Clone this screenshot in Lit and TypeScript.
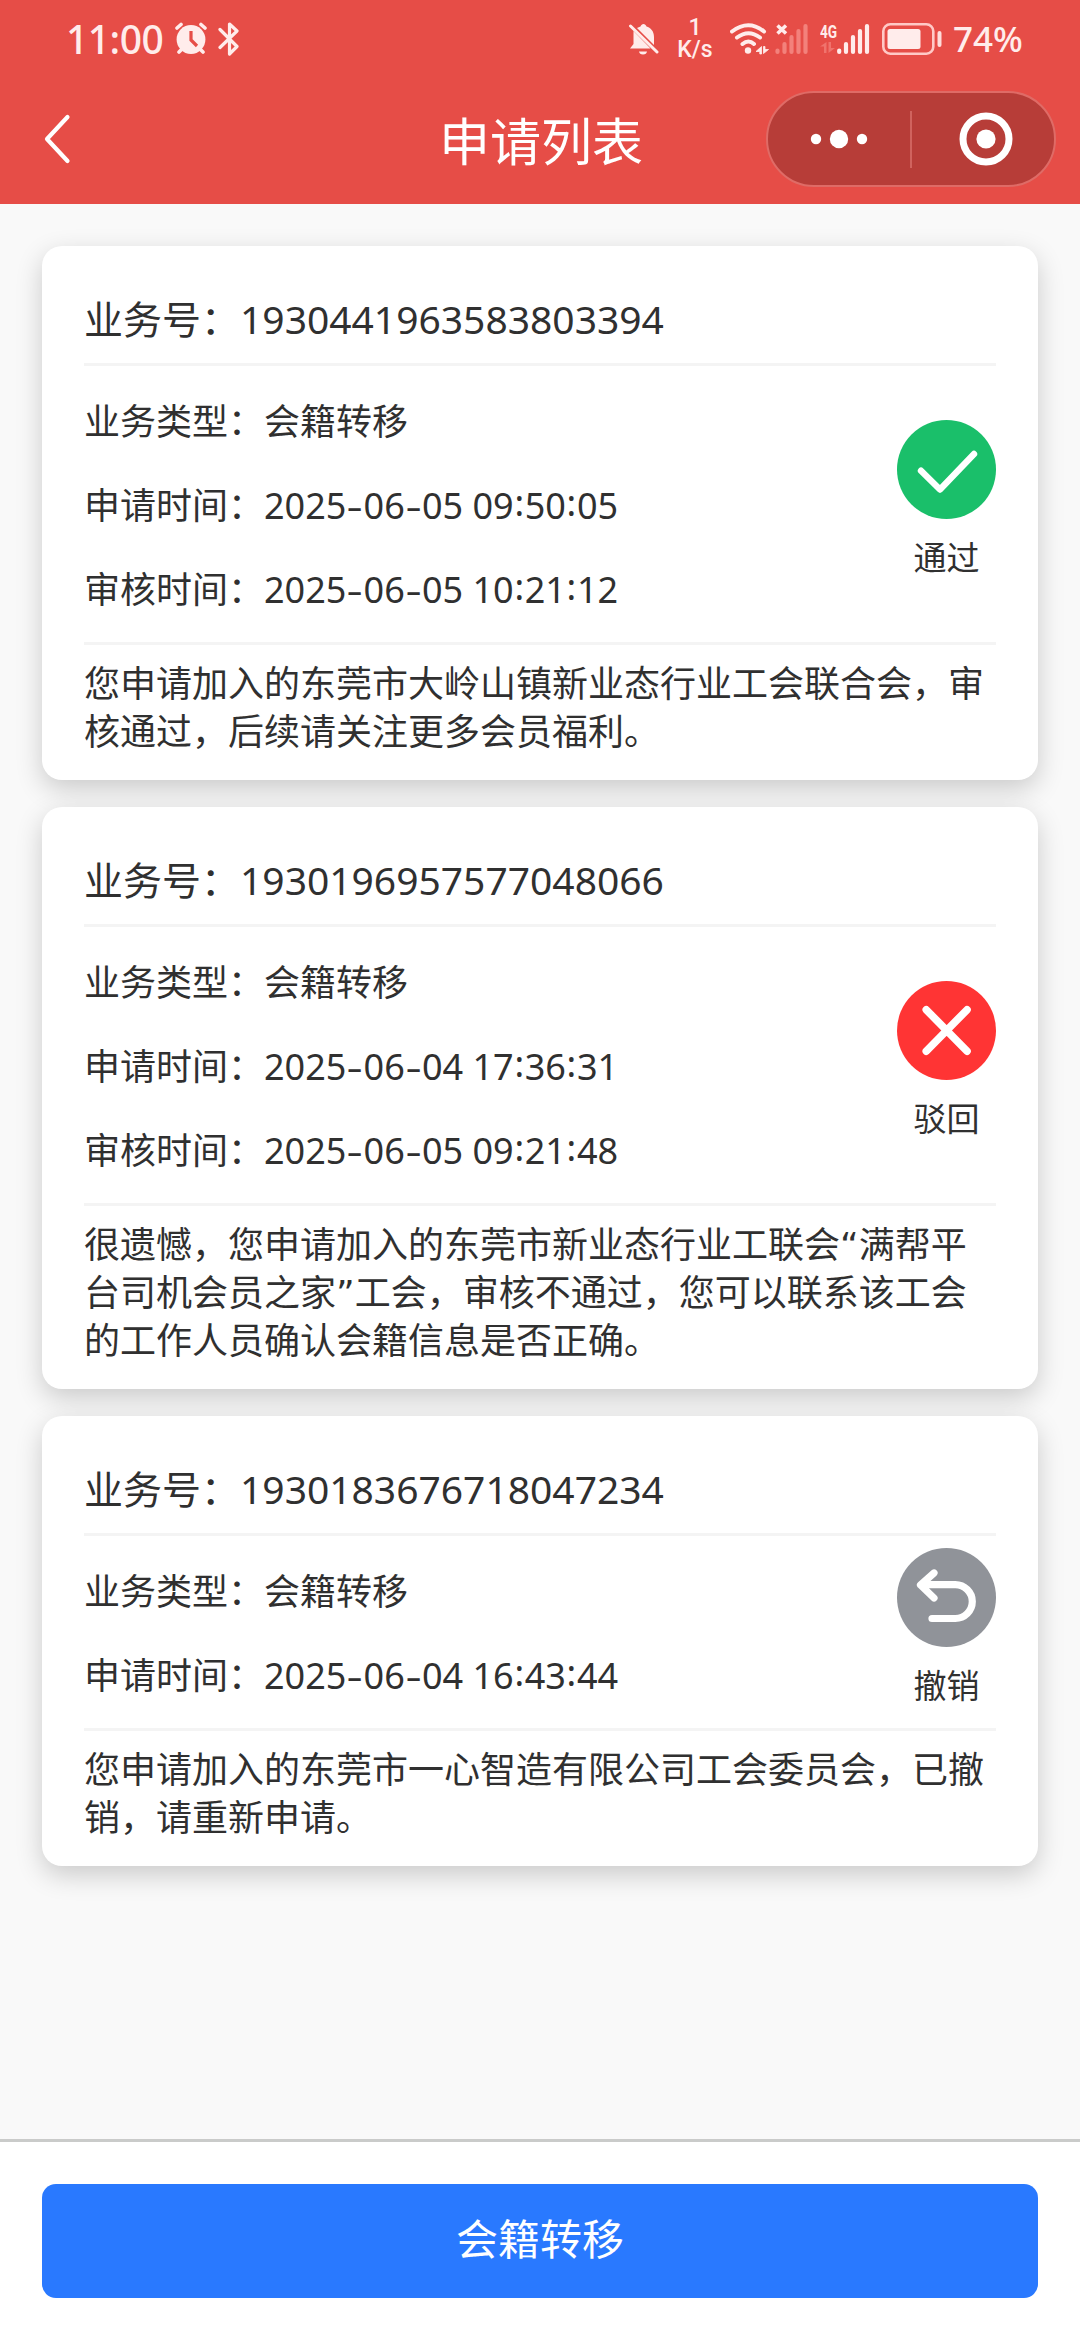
import { LitElement, html, css, svg, type TemplateResult } from "lit";
import { customElement, property } from "lit/decorators.js";

type Status = "pass" | "reject" | "revoke";

interface Application {
  id: string;
  type: string;
  applied: string;
  reviewed?: string;
  status: Status;
  message: string;
}

const applications: Application[] = [
  {
    id: "1930441963583803394",
    type: "会籍转移",
    applied: "2025-06-05 09:50:05",
    reviewed: "2025-06-05 10:21:12",
    status: "pass",
    message: "您申请加入的东莞市大岭山镇新业态行业工会联合会，审核通过，后续请关注更多会员福利。",
  },
  {
    id: "1930196957577048066",
    type: "会籍转移",
    applied: "2025-06-04 17:36:31",
    reviewed: "2025-06-05 09:21:48",
    status: "reject",
    message:
      "很遗憾，您申请加入的东莞市新业态行业工联会“满帮平台司机会员之家”工会，审核不通过，您可以联系该工会的工作人员确认会籍信息是否正确。",
  },
  {
    id: "1930183676718047234",
    type: "会籍转移",
    applied: "2025-06-04 16:43:44",
    status: "revoke",
    message: "您申请加入的东莞市一心智造有限公司工会委员会，已撤销，请重新申请。",
  },
];

const statusLabels: Record<Status, string> = { pass: "通过", reject: "驳回", revoke: "撤销" };
const statusColors: Record<Status, string> = { pass: "#1abf6a", reject: "#ff3434", revoke: "#909399" };
const statusMarks: Record<Status, TemplateResult> = {
  pass: svg`<path d="M24 50.7 43 69.5 77 34" stroke-width="6.4"/>`,
  reject: svg`<path d="M29.3 28.8 70 70.2M70 28.8 29.3 70.2" stroke-width="7.6"/>`,
  revoke: svg`<path d="M37 25 23.5 37 37 50M25 36.7H58.3A17 16.9 0 0 1 58.3 70.5H35" stroke-width="7.2"/>`,
};

@customElement("phone-status-bar")
class PhoneStatusBar extends LitElement {
  static styles = css`
    :host { display: block; color: #ffeceb; }
    .bar { display: flex; align-items: center; height: 78px; padding: 0 61px 0 66px; }
    .time { font-size: 39px; font-weight: 500; letter-spacing: -0.5px; line-height: 78px; width: 101px; }
    .alarm { margin-left: 7px; }
    .bt { margin-left: 10px; }
    .right { display: flex; align-items: center; margin-left: auto; }
    .speed { display: flex; flex-direction: column; width: 38px; margin-left: 17px; font-family: "Roboto", sans-serif; font-size: 23px; line-height: 22px; font-weight: 500; text-align: center; }
    .speed b { font-weight: 500; height: 22px; }
    .wifi { margin-left: 16px; }
    .sim1 { margin-left: 5px; }
    .sim2 { display: flex; align-items: flex-end; margin-left: 11px; height: 32px; }
    .net { display: flex; flex-direction: column; align-items: flex-start; width: 17px; height: 32px; }
    .gen { font-family: "Roboto", sans-serif; font-size: 18px; font-weight: 700; line-height: 17px; height: 18px; transform: scaleX(0.76); transform-origin: left; }
    .battery { margin-left: 12px; }
    .pct { margin-left: 11px; font-size: 35px; font-weight: 500; line-height: 78px; width: 66px; }
    svg { display: block; flex: none; }
  `;
  render() {
    return html`<div class="bar">
      <div class="time">11:00</div>
      <svg class="alarm" width="34" height="34" viewBox="0 0 34 34">
        <circle cx="17" cy="17.5" r="14.4" fill="#ffeceb" />
        <path d="M3 6 7 2.5M31 6 27 2.5M5 30 8 27M29 30 26 27" stroke="#ffeceb" stroke-width="3.6" stroke-linecap="round" />
        <path d="M17 9V18L23 24" fill="none" stroke="#e64d47" stroke-width="3.2" />
      </svg>
      <svg class="bt" width="22" height="36" viewBox="0 0 22 36">
        <path d="M2 8.5 19 25.5 11.5 33V3L19 10 2 26.5" fill="none" stroke="#ffeceb" stroke-width="3.2" stroke-linejoin="round" stroke-linecap="round" />
      </svg>
      <div class="right">
        <svg width="31" height="34" viewBox="0 0 31 34">
          <path d="M5.5 11.5V22L2 26.5H22.5L5.5 9ZM9 6 26 23V15C26 9 22.5 5.5 18.5 4.5 17.5 1 13.5 1 12.5 4.5Z" fill="#ffeceb" />
          <path d="M11 29.5H19Q18.5 32.5 15 32.5T11 29.5Z" fill="#ffeceb" />
          <path d="M2.5 4 29 30" stroke="#ffeceb" stroke-width="3" stroke-linecap="round" />
        </svg>
        <div class="speed"><b>1</b><span>K/s</span></div>
        <svg class="wifi" width="40" height="32" viewBox="0 0 40 32">
          <g fill="none" stroke="#ffeceb" stroke-width="4" stroke-linecap="round">
            <path d="M2 8.5Q18.5-4 34 8.5M7 14.5Q18.5 6 30 14.5M12.5 21Q18.5 16 24 21" />
          </g>
          <circle cx="18" cy="27.5" r="3.2" fill="#ffeceb" />
          <path d="M31.5 23.5V31H29.8V28.5H26ZM33.5 30.5V23.5H35V26.5H38.5Z" fill="#ffeceb" stroke="#ffeceb" stroke-width="0.8" />
        </svg>
        <svg class="sim1" width="34" height="32" viewBox="0 0 34 32">
          <path d="M2.5 2.5 11 10.5M11 2.5 2.5 10.5" stroke="#ffeceb" stroke-width="3.6" />
          <path d="M2.5 27.5V29M9.5 21V29M16.5 14V29M23.5 8V29M30.5 3V29" stroke="#f3817b" stroke-width="4.2" stroke-linecap="round" />
        </svg>
        <div class="sim2">
          <div class="net">
            <span class="gen">4G</span>
            <svg width="16" height="13" viewBox="0 0 16 13">
              <path d="M6.5 1V12H4V5.5H0ZM8.5 12V1H11V7H15Z" fill="#f0736d" />
            </svg>
          </div>
          <svg width="33" height="32" viewBox="0 0 33 32">
            <path d="M2.2 27.5V29M9 21V29M16 14V29M23 8V29M30 3V29" stroke="#ffeceb" stroke-width="4.2" stroke-linecap="round" />
          </svg>
        </div>
        <svg class="battery" width="60" height="32" viewBox="0 0 60 32">
          <rect x="1.3" y="1.3" width="50" height="29.4" rx="7" fill="none" stroke="#ffc9c6" stroke-width="2.6" />
          <rect x="5.5" y="6" width="33" height="20" rx="2.5" fill="#ffeceb" />
          <rect x="55.5" y="8" width="4" height="16" rx="2" fill="#ffdcda" />
        </svg>
        <div class="pct">74%</div>
      </div>
    </div>`;
  }
}

@customElement("nav-bar")
class NavBar extends LitElement {
  @property() heading = "";
  static styles = css`
    :host { display: block; }
    .nav { display: grid; grid-template-columns: 314px 1fr 314px; align-items: center; height: 126px; box-sizing: border-box; padding-bottom: 4px; color: #fff; }
    .back { margin-left: 41px; }
    .title { text-align: center; font-size: 51px; line-height: 60px; padding: 3px 0 0 2px; }
    .capsule { display: flex; align-items: center; box-sizing: border-box; width: 290px; height: 96px; border: 2px solid #df6b66; border-radius: 48px; background: #b73d38; }
    .half { display: flex; align-items: center; justify-content: center; box-sizing: border-box; width: 142px; }
    .close { padding-left: 6px; }
    .sep { width: 2px; height: 57px; background: #d0635e; }
    svg { display: block; }
  `;
  render() {
    return html`<div class="nav">
      <svg class="back" width="34" height="52" viewBox="0 0 34 52">
        <path d="M26.5 4 6 26 26.5 48" fill="none" stroke="#fff" stroke-width="4.2" stroke-linejoin="round" stroke-linecap="round" />
      </svg>
      <div class="title">${this.heading}</div>
      <div class="capsule">
        <div class="half">
          <svg width="58" height="20" viewBox="0 0 58 20" fill="#fff">
            <circle cx="6" cy="10" r="5.2" /><circle cx="29" cy="10" r="9.2" /><circle cx="52" cy="10" r="5.2" />
          </svg>
        </div>
        <div class="sep"></div>
        <div class="half close">
          <svg width="54" height="54" viewBox="0 0 54 54">
            <circle cx="27" cy="27" r="23" fill="none" stroke="#fff" stroke-width="7" />
            <circle cx="27" cy="27" r="9.6" fill="#fff" />
          </svg>
        </div>
      </div>
    </div>`;
  }
}

@customElement("application-card")
class ApplicationCard extends LitElement {
  @property({ attribute: false }) item!: Application;
  static styles = css`
    :host { display: block; }
    .card { background: #fff; border-radius: 20px; padding: 0 42px; box-shadow: 0 9px 27px rgba(0, 0, 0, 0.19); color: #303030; }
    .head { box-sizing: border-box; height: 120px; padding-top: 45px; font-size: 39px; line-height: 56px; border-bottom: 3px solid #f4f4f4; }
    .body { display: flex; align-items: center; justify-content: space-between; padding: 12px 0; border-bottom: 3px solid #f4f4f4; }
    .row { box-sizing: border-box; height: 84px; padding-top: 2px; line-height: 84px; font-size: 36px; white-space: nowrap; }
    .dash, .colon { display: inline-block; text-align: center; line-height: 1; }
    .dash { width: 17.2px; transform: scaleX(1.4); }
    .colon { width: 11px; position: relative; top: -3px; }
    .status { display: flex; flex-direction: column; align-items: center; width: 99px; }
    .status svg { display: block; }
    .label { margin: 18px 0 9px; font-size: 33px; line-height: 42px; white-space: nowrap; }
    .message { padding: 16px 0 23px; font-family: "DejaVu Sans", "Noto Sans CJK SC", sans-serif; font-size: 36px; line-height: 48px; }
  `;
  private stamp(value: string) {
    return [...value].map((c) =>
      c === "-" ? html`<span class="dash">-</span>` : c === ":" ? html`<span class="colon">:</span>` : c
    );
  }
  render() {
    const a = this.item;
    return html`<div class="card">
      <div class="head">业务号：${a.id}</div>
      <div class="body">
        <div>
          <div class="row">业务类型：${a.type}</div>
          <div class="row">申请时间：${this.stamp(a.applied)}</div>
          ${a.reviewed ? html`<div class="row">审核时间：${this.stamp(a.reviewed)}</div>` : null}
        </div>
        <div class="status">
          <svg width="99" height="99" viewBox="0 0 99 99" fill="none" stroke="#fff" stroke-linecap="round" stroke-linejoin="round">
            <circle cx="49.5" cy="49.5" r="49.5" fill=${statusColors[a.status]} stroke="none" />
            ${statusMarks[a.status]}
          </svg>
          <div class="label">${statusLabels[a.status]}</div>
        </div>
      </div>
      <div class="message">${a.message}</div>
    </div>`;
  }
}

@customElement("app-root")
class AppRoot extends LitElement {
  static styles = css`
    :host { display: block; font-family: "Noto Sans", "Noto Sans CJK SC", sans-serif; }
    .page { display: flex; flex-direction: column; width: 1080px; height: 2340px; background: #f9f9f9; overflow: hidden; }
    .top { flex: none; height: 204px; background: #e64d47; }
    .list { flex: 1; display: flex; flex-direction: column; gap: 27px; padding: 42px 42px 0; }
    .footer { flex: none; box-sizing: border-box; height: 201px; padding: 42px; border-top: 3px solid #cacbca; background: #fff; }
    .submit { display: block; width: 100%; height: 114px; border: 0; border-radius: 14px; background: #2979ff; color: #fff; font: inherit; font-size: 42px; line-height: 110px; padding: 0 0 4px; }
  `;
  render() {
    return html`<div class="page">
      <header class="top">
        <phone-status-bar></phone-status-bar>
        <nav-bar heading="申请列表"></nav-bar>
      </header>
      <main class="list">
        ${applications.map((a) => html`<application-card .item=${a}></application-card>`)}
      </main>
      <footer class="footer"><button class="submit">会籍转移</button></footer>
    </div>`;
  }
}
